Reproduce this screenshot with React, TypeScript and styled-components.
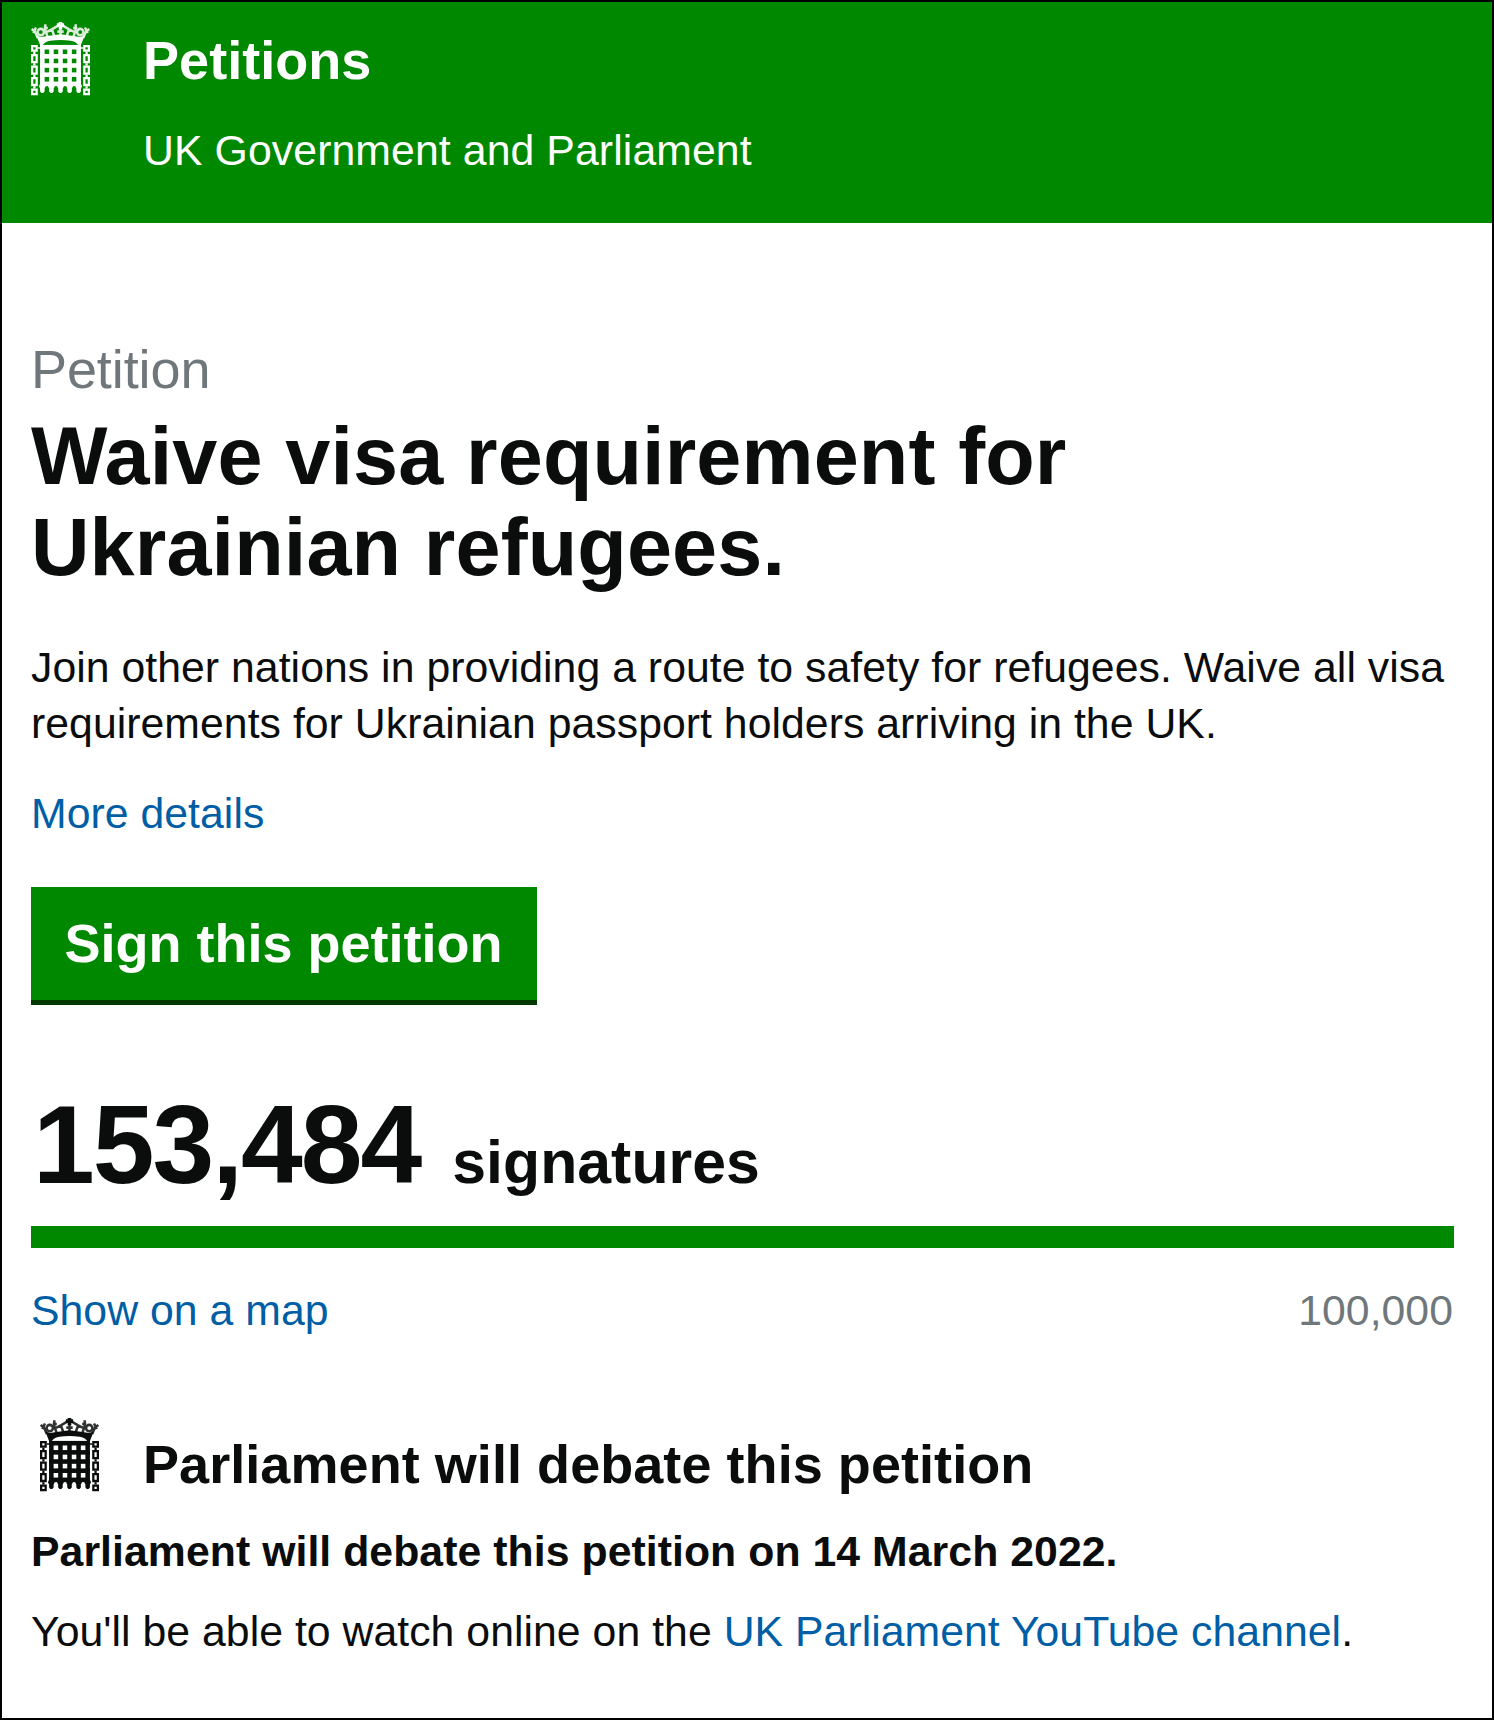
import React from 'react';
import styled, { createGlobalStyle } from 'styled-components';

const GlobalStyle = createGlobalStyle`
  *, *::before, *::after {
    box-sizing: border-box;
  }

  body {
    margin: 0;
    background: #fff;
    color: #0b0c0c;
    font-family: "Liberation Sans", Arial, sans-serif;
    font-size: 42.75px;
    line-height: 56px;
    letter-spacing: 0.04px;
  }
`;

const Page = styled.div`
  width: 1494px;
  height: 1720px;
  border: 2px solid #000;
  overflow: hidden;
`;

const Header = styled.header`
  display: flex;
  align-items: flex-start;
  height: 221px;
  padding: 20px 29px 0;
  background: #008800;
  color: #fff;
`;

const Crest = styled.svg`
  flex: none;
  width: 59px;
  height: 74px;
`;

const Brand = styled.div`
  margin: 8px 0 0 53px;
  white-space: nowrap;
`;

const BrandTitle = styled.div`
  margin-bottom: 32px;
  font-size: 54px;
  font-weight: 700;
  line-height: 60px;
`;

const BrandSubtitle = styled.div`
  letter-spacing: 0.1px;
`;

const Main = styled.main`
  padding: 116px 38px 0 29px;
`;

const Kicker = styled.div`
  color: #6f777b;
  font-size: 54px;
  line-height: 60px;
  letter-spacing: -0.1px;
`;

const Title = styled.h1`
  margin: 12px 0 46px;
  font-size: 81px;
  line-height: 91px;
  letter-spacing: 0.12px;
  white-space: nowrap;
`;

const Paragraph = styled.p`
  margin: 0;
  white-space: nowrap;
`;

const Link = styled.a`
  color: #005ea5;
  text-decoration: none;
`;

const Details = styled.div`
  margin: 34px 0 46px;
`;

const SignButton = styled.button`
  display: flex;
  align-items: center;
  justify-content: center;
  width: 506px;
  height: 113px;
  padding: 0 1px 2px 0;
  border: 0;
  background: #008800;
  box-shadow: 0 5px 0 #003900;
  color: #fff;
  font-family: inherit;
  font-size: 54px;
  font-weight: 700;
  white-space: nowrap;
`;

const Count = styled.div`
  display: flex;
  align-items: baseline;
  height: 120px;
  margin-top: 85px;
  font-weight: 700;
  line-height: 120px;
`;

const CountNumber = styled.span`
  margin-left: 2px;
  font-size: 111px;
  letter-spacing: -2px;
`;

const CountLabel = styled.span`
  margin-left: 32px;
  font-size: 60.75px;
`;

const ProgressBar = styled.div`
  height: 22px;
  margin-top: 21px;
  background: #008800;
`;

const ProgressFooter = styled.div`
  display: flex;
  justify-content: space-between;
  margin-top: 34px;
  padding-right: 1px;
`;

const Goal = styled.span`
  color: #6f777b;
`;

const DebateHeading = styled.div`
  display: flex;
  align-items: flex-start;
  margin-top: 80px;
  padding-left: 9px;
`;

const DebateTitle = styled.h2`
  margin: 16px 0 0 44px;
  font-size: 54px;
  line-height: 60px;
  letter-spacing: 0.06px;
  white-space: nowrap;
`;

const DebateDate = styled.p`
  margin: 29px 0 24px;
  font-weight: 700;
  letter-spacing: 0.06px;
  white-space: nowrap;
`;

const barColumns = [4, 8, 12, 16, 20];
const barRows = [10, 14, 18, 22, 26];

// [top, height] of each link in the side chains
const chainLinks = [
  [10, 3],
  [14, 4],
  [19, 4],
  [24, 4],
  [29, 3],
];

const Portcullis = () => (
  <Crest viewBox="0 0 26 32.3" preserveAspectRatio="none" fill="currentColor" aria-hidden="true">
    <path d="M2.400 6 4.500 6.600 8 6 13 5.300 18 6 21.500 6.600 23.600 6 22 10H20.800Q19.500 8.400 17.500 8.200Q13 7.600 8.500 8.200Q6.500 8.400 5.200 10H4z" />
    <path d="M11.400.6h.8V0h1.600v.6h.8v1.600h-.8v1h-1.600v-1h-.8z" />
    <g fill="none" stroke="currentColor" strokeWidth={1.1} opacity={0.85}>
      <path d="M.3 3 1.800 4.200 3 7M1 4.800 2.200 2.400M25.700 3 24.200 4.200 23 7M25 4.800 23.800 2.400" />
      <circle cx={4.300} cy={4.400} r={1.400} />
      <circle cx={21.700} cy={4.400} r={1.400} />
      <path d="M6.300 1v2.400L7.300 6.500M5.600 2.600h1.800M19.700 1v2.400L18.700 6.500M18.600 2.600h1.800" />
      <path d="M7 4.300 9.200 3.200 11.800 1.700M19 4.300 16.800 3.200 14.200 1.700M9.200 3.200 10.200 6M16.800 3.200 15.800 6M11.600 4.200h2.800M13 2.500V6" />
    </g>
    {barRows.map((y) => (
      <rect key={y} x={4} y={y} width={18} height={2} />
    ))}
    {barColumns.map((x) => (
      <path key={x} d={`M${x} 10h2v17l.5 1-.5 1v1.300l-.6.7h-.8l-.6-.7v-1.300l-.5-1 .5-1z`} />
    ))}
    {chainLinks.map(([y, h]) =>
      [0, 23].map((x) => (
        <path
          key={`${x}-${y}`}
          fillRule="evenodd"
          d={`M${x} ${y}h3v${h}h-3zM${x + 1} ${y + 1}h1v${h - 2}h-1z`}
        />
      ))
    )}
    <path d="M1 13h1v1H1zM1 18h1v1H1zM1 23h1v1H1zM1 28h1v1H1zM24 13h1v1h-1zM24 18h1v1h-1zM24 23h1v1h-1zM24 28h1v1h-1zM3 11h1v.7H3zM22 11h1v.7h-1z" />
  </Crest>
);

export default function App() {
  return (
    <>
      <GlobalStyle />
      <Page>
        <Header>
          <Portcullis />
          <Brand>
            <BrandTitle>Petitions</BrandTitle>
            <BrandSubtitle>UK Government and Parliament</BrandSubtitle>
          </Brand>
        </Header>
        <Main>
          <Kicker>Petition</Kicker>
          <Title>
            Waive visa requirement for
            <br />
            Ukrainian refugees.
          </Title>
          <Paragraph>
            Join other nations in providing a route to safety for refugees. Waive all visa
            <br />
            requirements for Ukrainian passport holders arriving in the UK.
          </Paragraph>
          <Details>
            <Link>More details</Link>
          </Details>
          <SignButton>Sign this petition</SignButton>
          <Count>
            <CountNumber>153,484</CountNumber>
            <CountLabel>signatures</CountLabel>
          </Count>
          <ProgressBar />
          <ProgressFooter>
            <Link>Show on a map</Link>
            <Goal>100,000</Goal>
          </ProgressFooter>
          <DebateHeading>
            <Portcullis />
            <DebateTitle>Parliament will debate this petition</DebateTitle>
          </DebateHeading>
          <DebateDate>Parliament will debate this petition on 14 March 2022.</DebateDate>
          <Paragraph>
            You'll be able to watch online on the <Link>UK Parliament YouTube channel</Link>.
          </Paragraph>
        </Main>
      </Page>
    </>
  );
}
